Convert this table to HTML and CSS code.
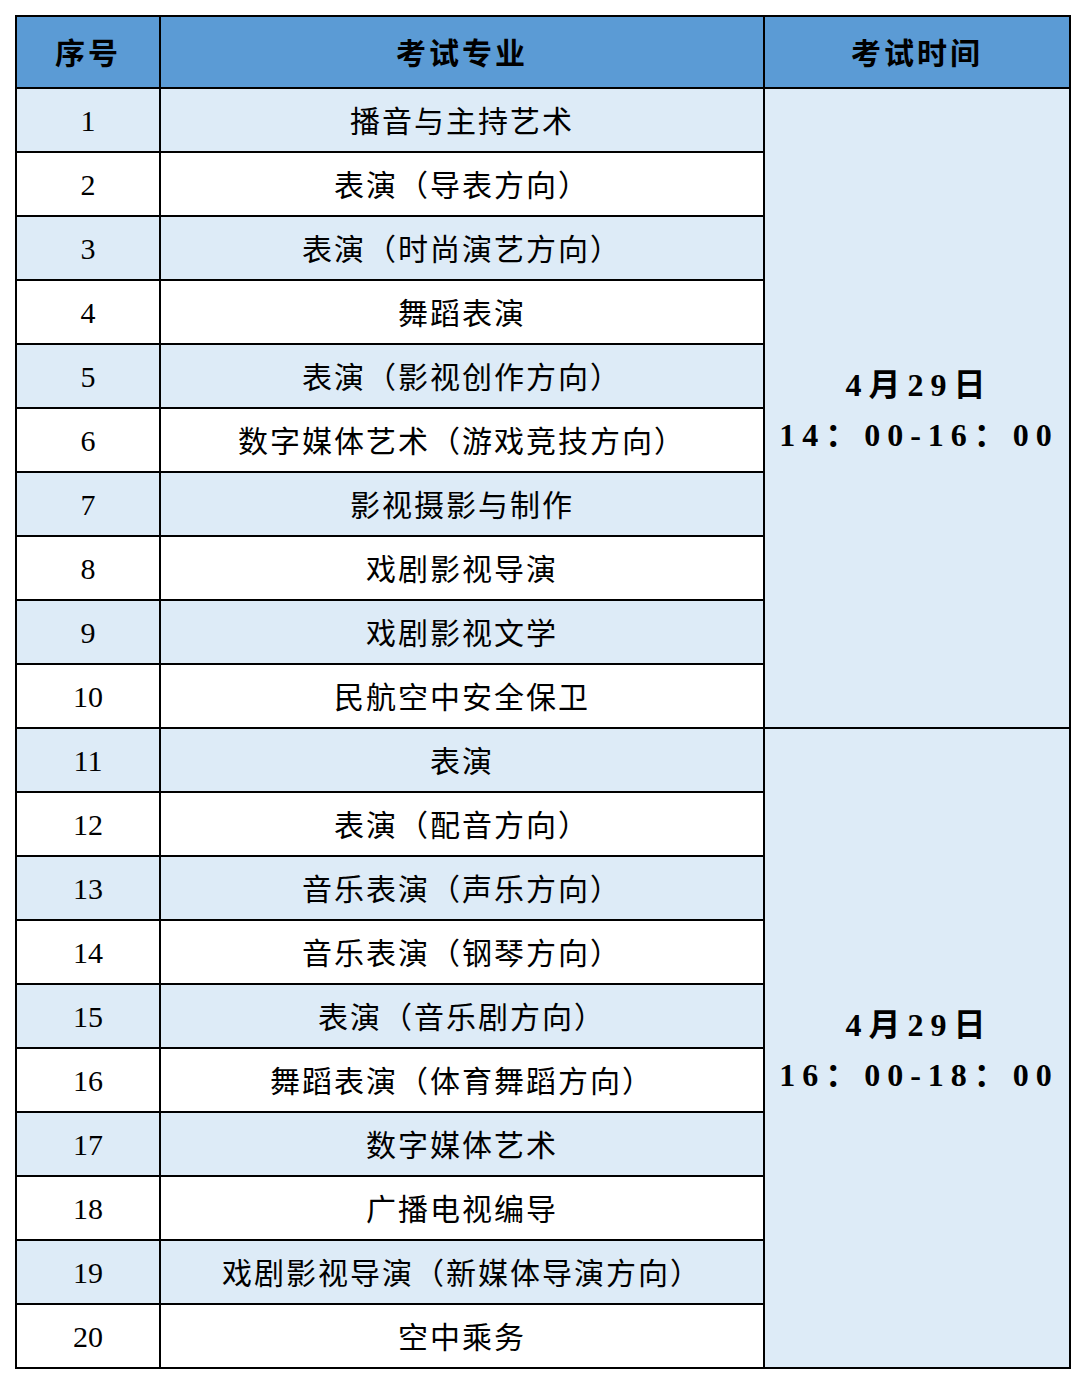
FILE: index.html
```html
<!DOCTYPE html>
<html lang="zh">
<head>
<meta charset="utf-8">
<link rel="stylesheet" href="styles.css">
</head>
<body>
<table class="sched">
<colgroup><col class="c1"><col class="c2"><col class="c3"></colgroup>
<thead>
<tr class="head"><th>序号</th><th>考试专业</th><th>考试时间</th></tr>
</thead>
<tbody>
<tr class="alt"><td class="num">1</td><td>播音与主持艺术</td><td class="time" rowspan="10">4月29日<br>14：00-16：00</td></tr>
<tr><td class="num">2</td><td>表演（导表方向）</td></tr>
<tr class="alt"><td class="num">3</td><td>表演（时尚演艺方向）</td></tr>
<tr><td class="num">4</td><td>舞蹈表演</td></tr>
<tr class="alt"><td class="num">5</td><td>表演（影视创作方向）</td></tr>
<tr><td class="num">6</td><td>数字媒体艺术（游戏竞技方向）</td></tr>
<tr class="alt"><td class="num">7</td><td>影视摄影与制作</td></tr>
<tr><td class="num">8</td><td>戏剧影视导演</td></tr>
<tr class="alt"><td class="num">9</td><td>戏剧影视文学</td></tr>
<tr><td class="num">10</td><td>民航空中安全保卫</td></tr>
<tr class="alt"><td class="num">11</td><td>表演</td><td class="time" rowspan="10">4月29日<br>16：00-18：00</td></tr>
<tr><td class="num">12</td><td>表演（配音方向）</td></tr>
<tr class="alt"><td class="num">13</td><td>音乐表演（声乐方向）</td></tr>
<tr><td class="num">14</td><td>音乐表演（钢琴方向）</td></tr>
<tr class="alt"><td class="num">15</td><td>表演（音乐剧方向）</td></tr>
<tr><td class="num">16</td><td>舞蹈表演（体育舞蹈方向）</td></tr>
<tr class="alt"><td class="num">17</td><td>数字媒体艺术</td></tr>
<tr><td class="num">18</td><td>广播电视编导</td></tr>
<tr class="alt"><td class="num">19</td><td>戏剧影视导演（新媒体导演方向）</td></tr>
<tr><td class="num">20</td><td>空中乘务</td></tr>
</tbody>
</table>
</body>
</html>
```
FILE: styles.css
```css
html, body {
  margin: 0;
  padding: 0;
  background: #ffffff;
}
body {
  padding: 15px 0 0 15px;
  font-family: "Liberation Serif", "Noto Sans CJK SC", serif;
  color: #000;
}
.sched {
  border-collapse: collapse;
  width: 1054px;
  table-layout: fixed;
}
.c1 { width: 144px; }
.c2 { width: 604px; }
.c3 { width: 306px; }
.sched th, .sched td {
  border: 2px solid #000;
  text-align: center;
  vertical-align: middle;
  padding: 3px 0 0 0;
  font-size: 30px;
  font-weight: 400;
  line-height: 1;
  letter-spacing: 2px;
}
.head th {
  height: 67px;
  background: #5b9bd5;
  font-weight: 700;
  font-size: 30px;
  letter-spacing: 3px;
}
.sched tbody tr {
  height: 64px;
}
.sched tbody td {
  height: 59px;
}
.alt td {
  background: #ddebf7;
}
.sched td.num {
  font-size: 30px;
  letter-spacing: 0;
  padding-top: 2px;
}
.sched td.time {
  background: #ddebf7;
  font-size: 32px;
  font-weight: 700;
  letter-spacing: 7px;
  line-height: 50px;
  padding-left: 4px;
}
```
